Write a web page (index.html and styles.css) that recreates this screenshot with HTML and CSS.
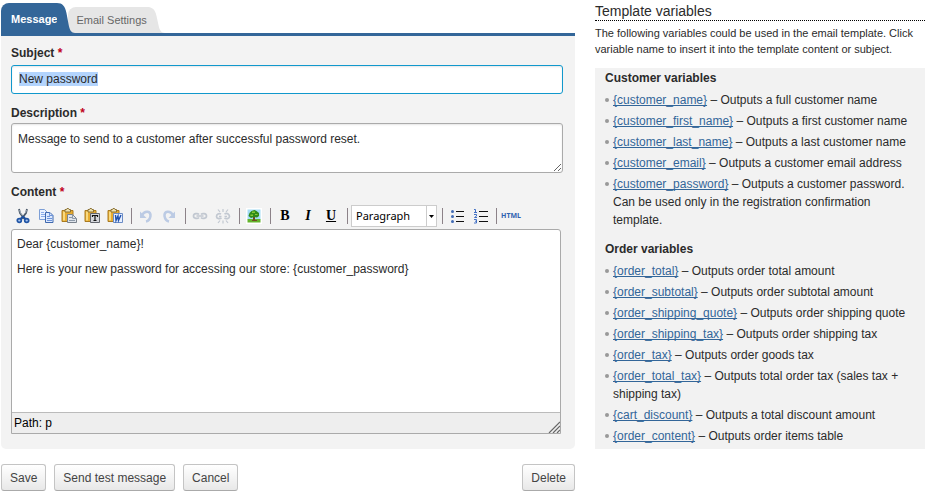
FILE: index.html
```html
<!DOCTYPE html>
<html lang="en">
<head>
<meta charset="utf-8">
<title>Email template</title>
<link rel="stylesheet" href="styles.css">
</head>
<body>
<div class="page">
  <main>
    <div class="tabs" role="tablist">
      <button class="tab active" type="button" role="tab" aria-selected="true"><span class="tab-label">Message</span><svg class="tail" viewBox="0 0 20 30" preserveAspectRatio="none" aria-hidden="true"><path d="M0 0C6 0 9 3 10.500 10L13 22C14 27 16 30 20 30H0Z"/></svg></button>
      <button class="tab" type="button" role="tab" aria-selected="false"><span class="tab-label">Email Settings</span><svg class="tail" viewBox="0 0 20 30" preserveAspectRatio="none" aria-hidden="true"><path d="M0 0C6 0 9 3 10.500 10L13 22C14 27 16 30 20 30H0Z"/></svg></button>
    </div>
    <form class="panel">
      <label class="label" for="subject">Subject <span class="req">*</span></label>
      <input class="field" id="subject" type="text" value="New password" autofocus>
      <label class="label" for="description">Description <span class="req">*</span></label>
      <textarea class="field area" id="description">Message to send to a customer after successful password reset.</textarea>
      <div class="label" id="content-label">Content <span class="req">*</span></div>
      <div class="toolbar" role="toolbar" aria-labelledby="content-label">
        <button class="tool" type="button" aria-label="Cut"><svg viewBox="0 0 16 16"><path d="M4 1l1 4 4.500 6M12 1l-1 4-4.500 6" fill="none" stroke="#4d5b6b" stroke-width="1.800"/><path d="M4.500 2l1 3 2 2.500M11.500 2l-1 3" fill="none" stroke="#b5c2ce" stroke-width=".7"/><path d="M8 8.500l-3 3M8 8.500l3 3" stroke="#1d4f9c" stroke-width="2"/><ellipse cx="4.300" cy="12.500" rx="2" ry="1.800" fill="#a9c7f0" stroke="#2054a5" stroke-width="1.700"/><ellipse cx="11.700" cy="12.500" rx="2" ry="1.800" fill="#a9c7f0" stroke="#2054a5" stroke-width="1.700"/></svg></button>
        <button class="tool" type="button" aria-label="Copy"><svg viewBox="0 0 16 16"><path d="M1.500 1.500h5l3 3v7h-8z" fill="#eaf2ff" stroke="#7d9fd6"/><path d="M3 4.500h3M3 6.500h4M3 8.500h4" stroke="#8badeb"/><path d="M7.500 4.500h4.500l3 3v7H7.500z" fill="#dce9ff" stroke="#3f68ae"/><path d="M11.500 4.500v3H15M9 8.500h3M9 10.500h5M9 12.500h5" fill="none" stroke="#6d94da"/></svg></button>
        <button class="tool" type="button" aria-label="Paste"><svg viewBox="0 0 16 16"><path d="M1 2.500h11v11H1z" fill="#e7ac30" stroke="#a97a20"/><path d="M2 3.500h2v9H2z" fill="#f8d980"/><path d="M4 3V1.500h1.500L6 .5h1.500l.5 1h1.500V4H4z" fill="#eee2b0" stroke="#8b7135"/><path d="M6.500 6.500h5l4 4v4h-9z" fill="#dfe4eb" stroke="#7a828d"/><path d="M8 9.500h3M8 12.500h6M11.500 7v3.500H15" fill="none" stroke="#8c99a9"/></svg></button>
        <button class="tool" type="button" aria-label="Paste as plain text"><svg viewBox="0 0 16 16"><path d="M1 2.500h11v11H1z" fill="#e7ac30" stroke="#a97a20"/><path d="M2 3.500h2v9H2z" fill="#f8d980"/><path d="M4 3V1.500h1.500L6 .5h1.500l.5 1h1.500V4H4z" fill="#eee2b0" stroke="#8b7135"/><path d="M6.500 5.500h9v9h-9z" fill="#d5d7dc" stroke="#62666e"/><path d="M8.500 9V7.500h5V9M11 7.500v5M9.500 12.500h3" fill="none" stroke="#111" stroke-width="1.200"/></svg></button>
        <button class="tool" type="button" aria-label="Paste from Word"><svg viewBox="0 0 16 16"><path d="M1 2.500h11v11H1z" fill="#e7ac30" stroke="#a97a20"/><path d="M2 3.500h2v9H2z" fill="#f8d980"/><path d="M4 3V1.500h1.500L6 .5h1.500l.5 1h1.500V4H4z" fill="#eee2b0" stroke="#8b7135"/><path d="M6.500 5.500h9v9h-9z" fill="#e8f0ff" stroke="#6b8cc5"/><path d="M8.500 7l.5 5.500L11 8l.5 4.500L14 7" fill="none" stroke="#1e50ad" stroke-width="1.400"/></svg></button>
        <span class="sep"></span>
        <button class="tool" type="button" aria-label="Undo" disabled><svg viewBox="0 0 16 16"><path d="M4 7C7 2 13 3 12.500 8c-.5 3-2 5-4.500 5.500" fill="none" stroke="#bccbe4" stroke-width="2.500"/><path d="M2 3.500V10h6.500z" fill="#bccbe4"/></svg></button>
        <button class="tool" type="button" aria-label="Redo" disabled><svg viewBox="0 0 16 16"><path d="M12 7C9 2 3 3 3.500 8c.5 3 2 5 4.500 5.500" fill="none" stroke="#bccbe4" stroke-width="2.500"/><path d="M14 3.500V10H7.500z" fill="#bccbe4"/></svg></button>
        <span class="sep"></span>
        <button class="tool" type="button" aria-label="Insert link" disabled><svg viewBox="0 0 16 16" fill="none" stroke="#c2c8d1" stroke-width="1.700"><path d="M7 6.500C6 5.300 1.500 5 1.500 8S6 10.700 7 9.500M9 6.500c1-1.200 5.500-1.500 5.500 1.500S10 10.700 9 9.500M4.500 8h7"/></svg></button>
        <button class="tool" type="button" aria-label="Remove link" disabled><svg viewBox="0 0 16 16" fill="none" stroke="#c2c8d1" stroke-width="1.700"><path d="M6 6C4 5 1.500 6 1.500 8.500S5 11 6.500 10M9.500 6c3-1.500 5 .5 5 2.500S11 11.500 9.500 10M4 8.500h2.500M9.500 8.500H12"/><path d="M8 1v3M8 12.500v3M3 1.500l2 2.500M13 1.500L11 4M3 15l2-2.500M13 15l-2-2.500" stroke-width="1.200"/></svg></button>
        <span class="sep"></span>
        <button class="tool" type="button" aria-label="Insert image"><svg viewBox="0 0 16 16"><path d="M0 0h16v16H0z" fill="#fff"/><path d="M1.500 1.500h13v10h-13z" fill="#a5dcf5"/><path d="M1.500 11h13v3.500h-13z" fill="#63b32b"/><path d="M7 8h2v4h2v1H6v-1h1z" fill="#704b20"/><path d="M5.500 3l3-1 2 1 2.500 2v3l-2 1.500L8 9l-3 1-2.500-2 1-3z" fill="#2f8a18"/><path d="M6 3.500h3v1.500H6zM9 6h2.500v1H9zM4.500 6.500H7v1.500H4.500z" fill="#85c936"/></svg></button>
        <span class="sep"></span>
        <button class="tool glyph bold" type="button" aria-label="Bold">B</button>
        <button class="tool glyph italic" type="button" aria-label="Italic">I</button>
        <button class="tool glyph under" type="button" aria-label="Underline">U</button>
        <span class="sep"></span>
        <span class="format"><select aria-label="Format"><option>Paragraph</option></select><svg class="arrow" viewBox="0 0 10 20" aria-hidden="true"><path d="M0 0h1v20H0z" fill="#ccc"/><path d="M3 9h5L5.500 12z"/></svg></span>
        <span class="sep"></span>
        <button class="tool" type="button" aria-label="Bulleted list"><svg viewBox="0 0 16 16"><path d="M7 3.500h8M7 8.500h8M7 13.500h8" stroke="#111"/><circle cx="3.500" cy="3.500" r="1.500" fill="#416bb5"/><circle cx="3.500" cy="8.500" r="1.500" fill="#416bb5"/><circle cx="3.500" cy="13.500" r="1.500" fill="#416bb5"/></svg></button>
        <button class="tool" type="button" aria-label="Numbered list"><svg viewBox="0 0 16 16"><path d="M7 3.500h9M7 8.500h9M7 13.500h9" stroke="#111"/><path d="M2 1.500h1.500V4.500M2 4.500h3M2 6.500h2.500V8L2.500 9.500H5M2 11.500h2.500v3.500H2M3 13.200h1.500" fill="none" stroke="#4371c5"/></svg></button>
        <span class="sep"></span>
        <button class="tool html" type="button">HTML</button>
      </div>
      <div class="editor">
        <div class="body" contenteditable="true" role="textbox" aria-multiline="true" aria-labelledby="content-label"><p>Dear {customer_name}!</p><p>Here is your new password for accessing our store: {customer_password}</p></div>
        <div class="status"><span>Path: p</span><svg class="grip" viewBox="0 0 12 12" aria-hidden="true"><path d="M1 12L12 1M5 12l7-7M9 12l3-3" fill="none" stroke="#666" stroke-width="1.200"/></svg></div>
      </div>
    </form>
    <div class="actions">
      <button class="btn" type="button">Save</button>
      <button class="btn" type="button">Send test message</button>
      <button class="btn" type="button">Cancel</button>
      <button class="btn end" type="button">Delete</button>
    </div>
  </main>
  <aside>
    <h2>Template variables</h2>
    <p class="intro">The following variables could be used in the email template. Click variable name to insert it into the template content or subject.</p>
    <div class="vars">
      <h3>Customer variables</h3>
      <ul>
        <li><a href="#">{customer_name}</a> – Outputs a full customer name</li>
        <li><a href="#">{customer_first_name}</a> – Outputs a first customer name</li>
        <li><a href="#">{customer_last_name}</a> – Outputs a last customer name</li>
        <li><a href="#">{customer_email}</a> – Outputs a customer email address</li>
        <li><a href="#">{customer_password}</a> – Outputs a customer password. Can be used only in the registration confirmation template.</li>
      </ul>
      <h3>Order variables</h3>
      <ul>
        <li><a href="#">{order_total}</a> – Outputs order total amount</li>
        <li><a href="#">{order_subtotal}</a> – Outputs order subtotal amount</li>
        <li><a href="#">{order_shipping_quote}</a> – Outputs order shipping quote</li>
        <li><a href="#">{order_shipping_tax}</a> – Outputs order shipping tax</li>
        <li><a href="#">{order_tax}</a> – Outputs order goods tax</li>
        <li><a href="#">{order_total_tax}</a> – Outputs total order tax (sales tax + shipping tax)</li>
        <li><a href="#">{cart_discount}</a> – Outputs a total discount amount</li>
        <li><a href="#">{order_content}</a> – Outputs order items table</li>
      </ul>
    </div>
  </aside>
</div>
<script src="script.js"></script>
</body>
</html>
```
FILE: styles.css
```css
* { box-sizing: border-box; }
body { margin: 0; background: #fff; color: #2b2b2b; font: 12px/18px "Liberation Sans", Arial, sans-serif; }
button, input, textarea, select { font: inherit; color: inherit; }
h2, h3, p, ul { margin: 0; padding: 0; }
.page { display: grid; grid-template-columns: minmax(0, 1fr) 330px; gap: 20px; padding: 3px 9px 0 1px; align-items: start; }

.tabs { display: flex; align-items: flex-end; height: 33px; border-bottom: 3px solid #336699; }
.tab { display: flex; height: 26px; padding: 0; border: 0; background: none; color: #666; font-size: 11px; line-height: 26px; }
.tab-label { padding-left: 8px; background: #e6e6e6; border-top-left-radius: 8px; }
.tail { display: block; width: 18px; height: 100%; fill: #e6e6e6; }
.tab.active { position: relative; height: 30px; color: #fff; font-weight: bold; line-height: 32px; margin-right: -7px; }
.tab.active .tab-label { padding-left: 10px; background: #336699; }
.tab.active .tail { fill: #336699; }

.panel { padding: 8px 12px 15px 10px; background: #f3f3f3; border-radius: 0 0 5px 5px; }
.label { display: block; height: 19px; font-weight: bold; }
.req { color: #c00020; }
.field { display: block; width: 100%; margin-bottom: 10px; padding: 6px; border: 1px solid #aaa; border-radius: 3px; background: #fff; outline: 0; box-shadow: inset 0 1px 2px rgba(0, 0, 0, .1); }
input.field { height: 29px; margin-top: 2px; padding: 6px 7px 8px; line-height: 14px; border-color: #1198cc; }
.field::selection { background: #b3d4fd; color: #2b2b2b; }
.area { height: 50px; resize: vertical; }

.toolbar { display: flex; align-items: center; gap: 1px; height: 27px; padding-left: 1px; }
.tool { flex: none; width: 22px; height: 22px; padding: 3px; border: 0; background: none; color: #000; }
.tool svg { display: block; width: 16px; height: 16px; }
.sep { flex: none; width: 7px; height: 16px; padding-left: 4px; }
.sep::before { content: ""; display: block; width: 1px; height: 16px; background: #8c8288; }
.glyph { font: bold 14px/16px "Liberation Serif", serif; }
.italic { font-style: italic; }
.under { text-decoration: underline; }
.html { padding: 0; color: #2f62b0; font: bold 7px/22px "Noto Sans", sans-serif; }
.format { position: relative; flex: none; width: 86px; height: 22px; border: 1px solid #ccc; background: #fff; }
.format select { display: block; width: 100%; height: 20px; padding: 0 4px; border: 0; background: none; appearance: none; color: #000; font: 11px/20px "Noto Sans", sans-serif; }
.arrow { position: absolute; top: 0; right: 0; width: 10px; height: 20px; pointer-events: none; }

.editor { border: 1px solid #aaa; border-radius: 3px 3px 0 0; background: #fff; overflow: hidden; margin-right: 2px; }
.body { min-height: 182px; padding: 5px; outline: 0; }
.body p { margin-bottom: 7px; }
.status { display: flex; justify-content: space-between; align-items: flex-end; height: 21px; padding-left: 2px; border-top: 1px solid #bbb; background: #eee; color: #000; line-height: 20px; }
.grip { width: 12px; height: 12px; }

.actions { display: flex; gap: 8px; padding-top: 15px; }
.btn { height: 27px; padding: 0 8px; border: 1px solid #c4c4c4; border-bottom-color: #aaa; border-radius: 3px; background: linear-gradient(#fff, #e8e8e8); color: #444; }
.end { margin-left: auto; }

h2 { height: 18px; border-bottom: 1px dotted #000; font-size: 14px; font-weight: normal; line-height: 16px; }
.intro { padding: 4px 0 11px; font-size: 11px; line-height: 16px; }
.vars { padding: 1px 5px 4px 10px; background: #f2f2f2; }
.vars h3 { font-size: 12px; line-height: 18px; padding-bottom: 4px; }
.vars ul { list-style: none; }
.vars ul + h3 { padding-top: 11px; }
.vars li { position: relative; padding-left: 8px; margin-bottom: 3px; }
.vars li:last-child { margin-bottom: 0; }
.vars li::before { content: ""; position: absolute; left: 0; top: 7px; width: 4px; height: 4px; border-radius: 50%; background: #999; }
.vars a { color: #336699; text-decoration: underline; text-decoration-skip-ink: none; }
```
FILE: script.js
```js
const subject = document.getElementById("subject");
subject.focus();
subject.select();
```
